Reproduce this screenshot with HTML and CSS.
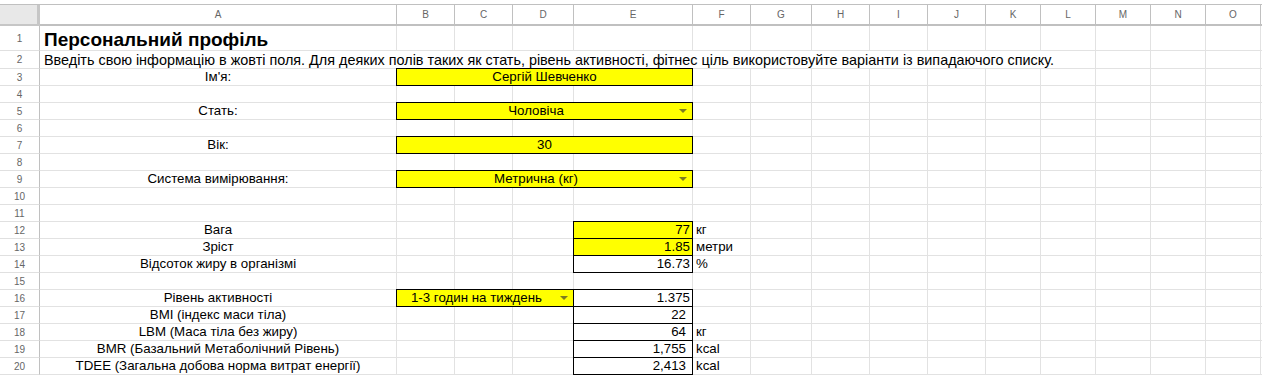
FILE: index.html
```html
<!DOCTYPE html>
<html lang="uk">
<head>
    <meta charset="UTF-8">
    <meta name="viewport" content="width=device-width, initial-scale=1.0">
    <title>Персональний профіль</title>
    <link rel="stylesheet" href="styles.css">
</head>
<body>

    <div class="sheet" id="sheet"></div>

    <script>
        // The last column is only a sliver at the window edge, so it has no letter
        const columns = ['A', 'B', 'C', 'D', 'E', 'F', 'G', 'H', 'I', 'J', 'K', 'L', 'M', 'N', 'O', ''];

        // Cell contents by row number, then column letter
        const data = {
            1: { A: { text: 'Персональний профіль', cls: 'title' } },
            2: { A: { text: 'Введіть свою інформацію в жовті поля. Для деяких полів таких як стать, рівень активності, фітнес ціль використовуйте варіанти із випадаючого списку.', cls: 'note', span: 12 } },
            3: { A: { text: "Ім'я:" }, B: { text: 'Сергій Шевченко', cls: 'input boxed', span: 4 } },
            5: { A: { text: 'Стать:' }, B: { text: 'Чоловіча', cls: 'input boxed select', span: 4 } },
            7: { A: { text: 'Вік:' }, B: { text: '30', cls: 'input boxed', span: 4 } },
            9: { A: { text: 'Система вимірювання:' }, B: { text: 'Метрична (кг)', cls: 'input boxed select', span: 4 } },
            12: { A: { text: 'Вага' }, E: { text: '77', cls: 'input boxed num' }, F: { text: 'кг', cls: 'unit' } },
            13: { A: { text: 'Зріст' }, E: { text: '1.85', cls: 'input boxed num' }, F: { text: 'метри', cls: 'unit' } },
            14: { A: { text: 'Відсоток жиру в організмі' }, E: { text: '16.73', cls: 'boxed num' }, F: { text: '%', cls: 'unit' } },
            16: { A: { text: 'Рівень активності' }, B: { text: '1-3 годин на тиждень', cls: 'input boxed select', span: 3 }, E: { text: '1.375', cls: 'boxed num' } },
            17: { A: { text: 'BMI (індекс маси тіла)' }, E: { text: '22', cls: 'boxed num fmt' } },
            18: { A: { text: 'LBM (Маса тіла без жиру)' }, E: { text: '64', cls: 'boxed num fmt' }, F: { text: 'кг', cls: 'unit' } },
            19: { A: { text: 'BMR (Базальний Метаболічний Рівень)' }, E: { text: '1,755', cls: 'boxed num fmt' }, F: { text: 'kcal', cls: 'unit' } },
            20: { A: { text: 'TDEE (Загальна добова норма витрат енергії)' }, E: { text: '2,413', cls: 'boxed num fmt' }, F: { text: 'kcal', cls: 'unit' } }
        };

        const sheet = document.getElementById('sheet');

        function addCell(cls, text) {
            const div = document.createElement('div');
            div.className = cls;
            if (text) div.textContent = text;
            sheet.appendChild(div);
        }

        // Column headers
        addCell('corner');
        columns.forEach(letter => addCell('col-head', letter));

        // Rows
        for (let r = 1; r <= 20; r++) {
            addCell('row-head', String(r));
            const row = data[r] || {};
            for (let i = 0; i < columns.length; i++) {
                const cell = row[columns[i]];
                if (cell) {
                    const span = cell.span || 1;
                    let cls = 'cell ' + (cell.cls || '');
                    if (span > 1) cls += ' span-' + span;
                    addCell(cls, cell.text);
                    i += span - 1;
                } else {
                    addCell('cell');
                }
            }
        }
    </script>

</body>
</html>
```

FILE: styles.css
```css
* {
    box-sizing: border-box;
}
body {
    margin: 0;
    background-color: white;
    font-family: "Liberation Sans", Arial, sans-serif;
}
.sheet {
    width: 1262px;
    margin-top: 4px;
    border-top: 1px solid #c0c0c0;
    display: grid;
    grid-template-columns: 40px 357px 58px 58px 61px 119px 58px 61px 58px 58px 58px 55px 55px 55px 55px 55px 100px;
    grid-template-rows: 21px 25px 18px repeat(18, 17px);
    overflow: hidden;
}
.corner {
    background-color: #e8e8e8;
    border-right: 3px solid #c6c6c6;
    border-bottom: 2px solid #c6c6c6;
}
.col-head, .row-head {
    display: flex;
    align-items: center;
    justify-content: center;
    font-size: 10px;
    color: #666;
}
.col-head {
    border-right: 1px solid #c0c0c0;
    border-bottom: 2px solid #c0c0c0;
}
.row-head {
    border-right: 1px solid #c0c0c0;
    border-bottom: 1px solid #e0e0e0;
}
.cell {
    display: flex;
    align-items: center;
    justify-content: center;
    padding: 0 3px;
    border-right: 1px solid #e2e2e2;
    border-bottom: 1px solid #e2e2e2;
    font-size: 13.3px;
    line-height: 16px;
    color: #000;
    white-space: nowrap;
}
.span-3 {
    grid-column: span 3;
}
.span-4 {
    grid-column: span 4;
}
.span-12 {
    grid-column: span 12;
}
.title {
    justify-content: flex-start;
    align-items: flex-end;
    padding-left: 4px;
    font-size: 19px;
    font-weight: bold;
    line-height: 21px;
}
.note {
    justify-content: flex-start;
    padding-left: 4px;
    font-size: 14.4px;
}
.input {
    background-color: #ffff00;
}
.boxed {
    position: relative;
}
.boxed::after {
    content: '';
    position: absolute;
    top: -1px;
    left: -1px;
    right: -1px;
    bottom: -1px;
    border: 1px solid #000;
}
.select {
    padding-right: 20px;
}
.select::before {
    content: '';
    position: absolute;
    right: 5px;
    top: 50%;
    margin-top: -2px;
    border-left: 4px solid transparent;
    border-right: 4px solid transparent;
    border-top: 4px solid #7d7d20;
}
.num {
    justify-content: flex-end;
    padding-right: 2px;
}
.fmt {
    padding-right: 6px;
}
.unit {
    justify-content: flex-start;
    padding-left: 3px;
}
```
